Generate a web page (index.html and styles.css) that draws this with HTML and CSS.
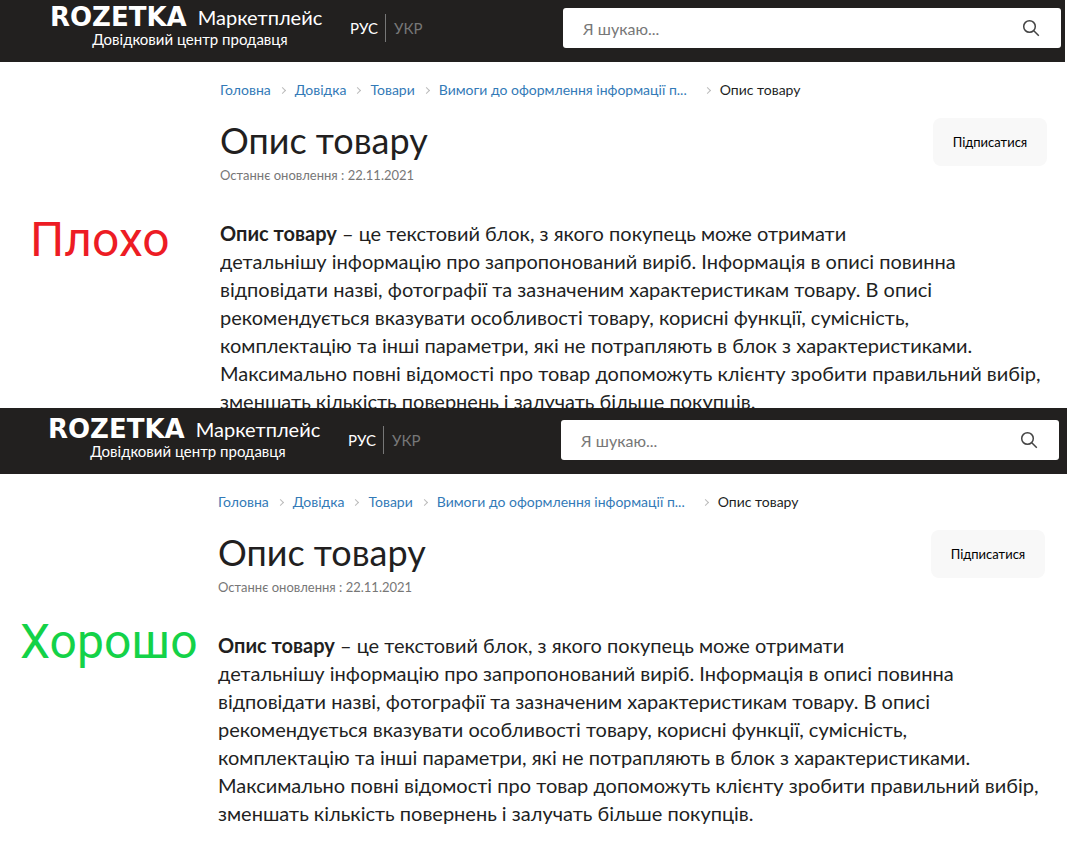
FILE: index.html
```html
<!DOCTYPE html>
<html lang="uk">
<head>
<meta charset="UTF-8">
<meta name="viewport" content="width=device-width, initial-scale=1.0">
<title>Опис товару</title>
<link rel="stylesheet" href="styles.css">
</head>
<body>
<section class="shot shot-bad">
    <header class="header">
        <div class="brand">
            <div class="brand-name"><strong class="logo">ROZETKA</strong><span class="market">Маркетплейс</span></div>
            <div class="brand-sub">Довідковий центр продавця</div>
        </div>
        <nav class="lang">
            <a class="active" href="#">РУС</a>
            <a href="#">УКР</a>
        </nav>
        <form class="search">
            <input type="text" placeholder="Я шукаю..." aria-label="Пошук">
            <button type="button" aria-label="Знайти">
                <svg width="18" height="18" viewBox="0 0 18 18" fill="none" stroke="#444" stroke-width="1.5"><circle cx="7.5" cy="7.5" r="5.8"/><path d="M11.8 11.8l5 5"/></svg>
            </button>
        </form>
    </header>
    <div class="content">
        <aside class="verdict">Плохо</aside>
        <main class="article">
            <nav class="crumbs">
                <a href="#">Головна</a>
                <a href="#">Довідка</a>
                <a href="#">Товари</a>
                <a class="long" href="#">Вимоги до оформлення інформації п...</a>
                <span>Опис товару</span>
            </nav>
            <div class="title-row">
                <div>
                    <h1>Опис товару</h1>
                    <div class="updated">Останнє оновлення : 22.11.2021</div>
                </div>
                <button class="subscribe" type="button">Підписатися</button>
            </div>
            <p class="text"><b>Опис товару</b> – це текстовий блок, з якого покупець може отримати<br>
            детальнішу інформацію про запропонований виріб. Інформація в описі повинна<br>
            відповідати назві, фотографії та зазначеним характеристикам товару. В описі<br>
            рекомендується вказувати особливості товару, корисні функції, сумісність,<br>
            комплектацію та інші параметри, які не потрапляють в блок з характеристиками.<br>
            Максимально повні відомості про товар допоможуть клієнту зробити правильний вибір,<br>
            зменшать кількість повернень і залучать більше покупців.</p>
        </main>
    </div>
</section>

<section class="shot shot-good">
    <header class="header">
        <div class="brand">
            <div class="brand-name"><strong class="logo">ROZETKA</strong><span class="market">Маркетплейс</span></div>
            <div class="brand-sub">Довідковий центр продавця</div>
        </div>
        <nav class="lang">
            <a class="active" href="#">РУС</a>
            <a href="#">УКР</a>
        </nav>
        <form class="search">
            <input type="text" placeholder="Я шукаю..." aria-label="Пошук">
            <button type="button" aria-label="Знайти">
                <svg width="18" height="18" viewBox="0 0 18 18" fill="none" stroke="#444" stroke-width="1.5"><circle cx="7.5" cy="7.5" r="5.8"/><path d="M11.8 11.8l5 5"/></svg>
            </button>
        </form>
    </header>
    <div class="content">
        <aside class="verdict">Хорошо</aside>
        <main class="article">
            <nav class="crumbs">
                <a href="#">Головна</a>
                <a href="#">Довідка</a>
                <a href="#">Товари</a>
                <a class="long" href="#">Вимоги до оформлення інформації п...</a>
                <span>Опис товару</span>
            </nav>
            <div class="title-row">
                <div>
                    <h1>Опис товару</h1>
                    <div class="updated">Останнє оновлення : 22.11.2021</div>
                </div>
                <button class="subscribe" type="button">Підписатися</button>
            </div>
            <p class="text"><b>Опис товару</b> – це текстовий блок, з якого покупець може отримати<br>
            детальнішу інформацію про запропонований виріб. Інформація в описі повинна<br>
            відповідати назві, фотографії та зазначеним характеристикам товару. В описі<br>
            рекомендується вказувати особливості товару, корисні функції, сумісність,<br>
            комплектацію та інші параметри, які не потрапляють в блок з характеристиками.<br>
            Максимально повні відомості про товар допоможуть клієнту зробити правильний вибір,<br>
            зменшать кількість повернень і залучать більше покупців.</p>
        </main>
    </div>
</section>
</body>
</html>
```
FILE: styles.css
```css
* {
    box-sizing: border-box;
}
body {
    margin: 0;
    background: #fff;
    color: #221f1f;
    font-family: Lato, sans-serif;
    font-size: 14px;
}
a {
    color: #337ab7;
    text-decoration: none;
}
.header {
    display: flex;
    align-items: flex-start;
    height: 66px;
    padding: 12px 8px 0 48px;
    background: #22201f;
    color: #fff;
}
.brand {
    width: 280px;
    white-space: nowrap;
}
.brand-name {
    display: flex;
    align-items: flex-start;
    gap: 11px;
    height: 19px;
}
.logo {
    font-family: "DejaVu Sans", sans-serif;
    font-size: 26px;
    line-height: 18px;
}
.market {
    font-size: 20px;
    line-height: 18px;
}
.brand-sub {
    font-size: 15px;
    line-height: 24px;
    text-align: center;
}
.lang {
    display: flex;
    margin-top: 6px;
    font-size: 15px;
    line-height: 28px;
}
.lang a {
    padding: 0 8px;
    color: #777;
}
.lang .active {
    padding: 0 7px 0 20px;
    border-right: 1px solid #777;
    color: #fff;
}
.search {
    display: flex;
    flex: 0 0 498px;
    height: 40px;
    margin-left: auto;
    border-radius: 3px;
    background: #fff;
}
.search input {
    flex: 1;
    padding: 0 20px;
    border: 0;
    outline: 0;
    background: none;
    font: 16px Lato, sans-serif;
}
.search input::placeholder {
    color: #777;
}
.search button {
    width: 60px;
    padding: 0;
    border: 0;
    background: none;
}
.search svg {
    display: block;
    margin: auto;
}
.content {
    display: flex;
}
.verdict {
    flex: 0 0 218px;
    font-family: Roboto, sans-serif;
    font-size: 48px;
    line-height: 56px;
}
.shot-bad .verdict {
    padding: 150px 0 0 30px;
    color: #ed1c24;
}
.shot-good .verdict {
    padding: 140px 0 0 20px;
    color: #14d248;
}
.article {
    flex: 1;
    padding: 18px 22px 0 0;
}
.crumbs {
    display: flex;
    line-height: 20px;
    white-space: nowrap;
}
.crumbs a::after {
    content: "";
    display: inline-block;
    width: 4px;
    height: 4px;
    margin: 0 10px 2px 9px;
    border: solid #bbb;
    border-width: 1px 1px 0 0;
    transform: rotate(45deg);
}
.crumbs .long::after {
    margin-left: 18px;
}
.title-row {
    display: flex;
    justify-content: space-between;
    align-items: flex-start;
    padding-top: 18px;
}
h1 {
    margin: 0;
    font-size: 36px;
    font-weight: 400;
    line-height: 44px;
}
.updated {
    color: #777;
    font-size: 13px;
    line-height: 26px;
}
.subscribe {
    width: 114px;
    height: 48px;
    padding: 0;
    border: 0;
    border-radius: 8px;
    background: #f8f8f8;
    color: #000;
    font: 13px Lato, sans-serif;
}
.text {
    margin: 31px 0 0;
    font-size: 20px;
    line-height: 28px;
    white-space: nowrap;
}
/* first page is scrolled a little and cut off by the second one */
.shot-bad .header {
    height: 62px;
    margin-right: 2px;
    padding: 8px 4px 0 50px;
}
.shot-bad .verdict {
    flex-basis: 220px;
}
.shot-bad .article {
    padding-right: 20px;
}
.shot-bad .text {
    max-height: 189px;
    overflow: hidden;
}
```
